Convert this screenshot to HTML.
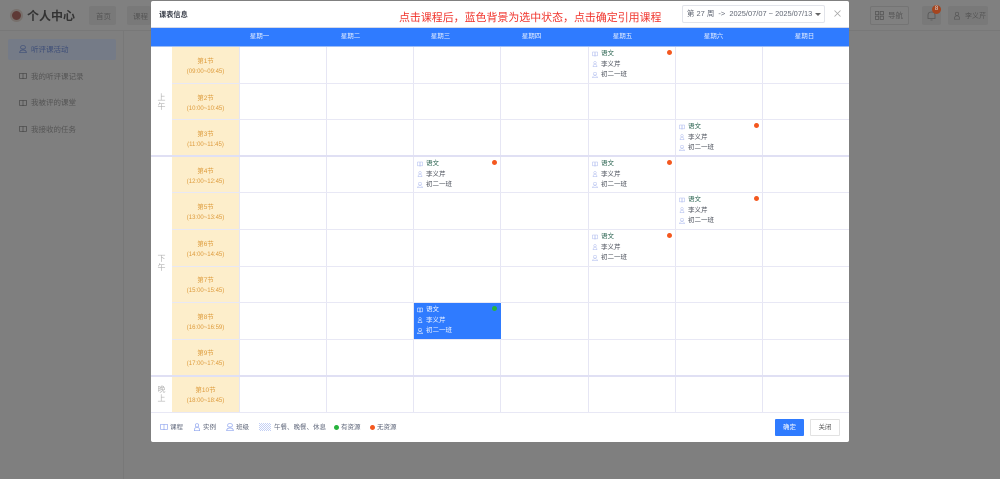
<!DOCTYPE html>
<html lang="zh">
<head>
<meta charset="utf-8">
<title>课表信息</title>
<style>
html,body{margin:0;padding:0;width:1000px;height:479px;overflow:hidden;background:#7f7f7f;font-family:"Liberation Sans","Noto Sans CJK SC",sans-serif;}
*{box-sizing:border-box;}
#r{position:absolute;left:0;top:0;width:1000px;height:479px;filter:blur(.3px);}
.a{position:absolute;white-space:nowrap;}
.hl{position:absolute;left:151px;width:698px;height:1px;background:#e8e8f5;}
.hl2{position:absolute;left:151px;width:698px;height:2px;background:#e0e0f4;}
.vl{position:absolute;top:47px;height:365px;width:1px;background:#e6e6f4;}
.day{position:absolute;top:28px;height:19px;line-height:18px;width:87px;text-align:center;color:#e8f0ff;font-size:6.5px;}
.slot{position:absolute;left:172px;width:68px;background:#fdeecb;border-right:1px solid #eee6d0;color:#dd9a3a;font-size:6.5px;text-align:center;line-height:9.5px;padding-top:10px;}
.slot small{font-size:6px;}
.per{position:absolute;left:151px;width:21px;text-align:center;color:#b5b5b5;font-size:8px;line-height:9px;}
.c{position:absolute;width:87px;height:36px;font-size:6.5px;color:#4a4f5a;}
.c svg{position:absolute;left:3px;width:6px;height:6px;}
.c span{position:absolute;left:12px;line-height:8px;}
.c i{position:absolute;left:78px;top:3px;width:5px;height:5px;border-radius:50%;background:#f4581f;}
.c .n{color:#2a6350;top:2.5px;}
.sel{background:#2f7bff;color:#f2f6ff;}
.sel .n{color:#f4f8ff;}
.sel i{background:#27b33d;}
.lg{position:absolute;top:423.5px;font-size:6.5px;color:#5c6478;line-height:8px;white-space:nowrap;}
.nav{position:absolute;color:#555;font-size:7.5px;white-space:nowrap;}
</style>
</head>
<body>
<svg width="0" height="0" style="position:absolute">
<defs>
<symbol id="b" viewBox="0 0 12 12"><path d="M1 2h4.500q.5 0 .5 1v7.500q0-.8-1-.8H1zM11 2H6.500q-.5 0-.5 1v7.500q0-.8 1-.8h4z" fill="none" stroke="currentColor" stroke-width="1"/></symbol>
<symbol id="p" viewBox="0 0 12 12"><circle cx="6" cy="3.500" r="2.500" fill="none" stroke="currentColor"/><path d="M2 11.500q0-5 4-5t4 5z" fill="none" stroke="currentColor"/></symbol>
<symbol id="g" viewBox="0 0 12 12"><rect x="2.500" y="1" width="7" height="5" rx="2.500" fill="none" stroke="currentColor"/><path d="M1 11.500q0-4 5-4t5 4z" fill="none" stroke="currentColor"/></symbol>
<pattern id="hatch" width="2" height="2" patternUnits="userSpaceOnUse"><rect width="2" height="2" fill="#fff"/><rect width="1" height="1" fill="#c4d0f4"/><rect x="1" y="1" width="1" height="1" fill="#c4d0f4"/></pattern>
</defs>
</svg>
<div id="r">
<!-- background page -->
<div class="a" style="left:0;top:0;width:1000px;height:31px;background:#808080;border-bottom:1px solid #787878"></div>
<div class="a" style="left:123px;top:31px;width:1px;height:448px;background:#787878"></div>
<div class="a" style="left:10px;top:9px;width:13px;height:13px;border-radius:50%;background:#5f3a36;border:2px solid #77706c"></div>
<div class="a" style="left:27px;top:9px;font-size:12px;font-weight:bold;color:#333;line-height:15px">个人中心</div>
<div class="a" style="left:89px;top:6px;width:27px;height:19px;background:#797979;border-radius:2px"></div>
<div class="nav" style="left:96px;top:11px">首页</div>
<div class="a" style="left:127px;top:6px;width:24px;height:19px;background:#797979;border-radius:2px"></div>
<div class="nav" style="left:133px;top:11px">课程</div>
<div class="a" style="left:8px;top:39px;width:108px;height:21px;background:#757b87;border-radius:2px"></div>
<svg class="a" style="left:19px;top:45px;color:#3f4f78" width="8" height="8"><use href="#g"/></svg>
<div class="nav" style="left:31px;top:44px;color:#3f4f78">听评课活动</div>
<svg class="a" style="left:19px;top:72px;color:#444" width="8" height="8"><use href="#b"/></svg>
<div class="nav" style="left:31px;top:71px">我的听评课记录</div>
<svg class="a" style="left:19px;top:99px;color:#444" width="8" height="8"><use href="#b"/></svg>
<div class="nav" style="left:31px;top:97px">我被评的课堂</div>
<svg class="a" style="left:19px;top:125px;color:#444" width="8" height="8"><use href="#b"/></svg>
<div class="nav" style="left:31px;top:124px">我接收的任务</div>

<div class="a" style="left:870px;top:6px;width:39px;height:19px;border:1px solid #747474;border-radius:2px"></div>
<svg class="a" style="left:875px;top:11px" width="9" height="9" viewBox="0 0 9 9" fill="none" stroke="#555" stroke-width=".8"><rect x=".5" y=".5" width="3.200" height="3.200"/><rect x="5.200" y=".5" width="3.200" height="3.200"/><rect x=".5" y="5.200" width="3.200" height="3.200"/><rect x="5.200" y="5.200" width="3.200" height="3.200"/></svg>
<div class="nav" style="left:888px;top:10px">导航</div>
<div class="a" style="left:922px;top:6px;width:19px;height:19px;background:#797979;border-radius:2px"></div>
<svg class="a" style="left:927px;top:11px" width="9" height="10" viewBox="0 0 9 10" fill="none" stroke="#555" stroke-width=".8"><path d="M1 7.500V4q0-3 3.500-3T8 4v3.500zM3.500 9h2"/></svg>
<div class="a" style="left:932px;top:5px;width:9px;height:9px;border-radius:50%;background:#a5451f;color:#ddd;font-size:6px;line-height:9px;text-align:center">8</div>
<div class="a" style="left:948px;top:6px;width:40px;height:19px;background:#797979;border-radius:2px"></div>
<svg class="a" style="left:953px;top:11px;color:#555" width="8" height="9"><use href="#p"/></svg>
<div class="nav" style="left:965px;top:11px;font-size:7px">李义芹</div>

<!-- modal -->
<div class="a" style="left:151px;top:1px;width:698px;height:441px;background:#fff;border-radius:2px"></div>
<div class="a" style="left:159px;top:9.500px;font-size:7.200px;line-height:9px;color:#3a3f4a;font-weight:bold">课表信息</div>
<div class="a" style="left:399px;top:10.500px;font-size:10.950px;line-height:14px;color:#f0342c">点击课程后，蓝色背景为选中状态，点击确定引用课程</div>
<div class="a" style="left:682px;top:5px;width:143px;height:18px;border:1px solid #e2e4ea;border-radius:2px;font-size:7.450px;line-height:16.500px;color:#5f6572;padding-left:4px">第 27 周 &nbsp;-&gt;&nbsp; 2025/07/07 ~ 2025/07/13</div>
<div class="a" style="left:815px;top:13px;width:0;height:0;border-left:3px solid transparent;border-right:3px solid transparent;border-top:3px solid #666"></div>
<svg class="a" style="left:834px;top:10px" width="7" height="7" viewBox="0 0 7 7" stroke="#a5a5a5" stroke-width=".8"><path d="M.5.5l6 6M6.500.5l-6 6"/></svg>

<div class="a" style="left:151px;top:27px;width:698px;height:1px;background:#d5d9e8"></div>
<div class="a" style="left:151px;top:28px;width:698px;height:19px;background:#2f7bff;border-bottom:1px solid #9dbdf5"></div>
<div class="day" style="left:216px">星期一</div>
<div class="day" style="left:307px">星期二</div>
<div class="day" style="left:397px">星期三</div>
<div class="day" style="left:488px">星期四</div>
<div class="day" style="left:579px">星期五</div>
<div class="day" style="left:670px">星期六</div>
<div class="day" style="left:761px">星期日</div>

<div class="slot" style="top:47px;height:37px">第1节<br><small>(09:00~09:45)</small></div>
<div class="slot" style="top:84px;height:36px">第2节<br><small>(10:00~10:45)</small></div>
<div class="slot" style="top:120px;height:37px">第3节<br><small>(11:00~11:45)</small></div>
<div class="slot" style="top:157px;height:36px">第4节<br><small>(12:00~12:45)</small></div>
<div class="slot" style="top:193px;height:37px">第5节<br><small>(13:00~13:45)</small></div>
<div class="slot" style="top:230px;height:36px">第6节<br><small>(14:00~14:45)</small></div>
<div class="slot" style="top:266px;height:37px">第7节<br><small>(15:00~15:45)</small></div>
<div class="slot" style="top:303px;height:36px">第8节<br><small>(16:00~16:59)</small></div>
<div class="slot" style="top:339px;height:37px">第9节<br><small>(17:00~17:45)</small></div>
<div class="slot" style="top:376px;height:36px">第10节<br><small>(18:00~18:45)</small></div>

<div class="per" style="top:93px">上<br>午</div>
<div class="per" style="top:254px">下<br>午</div>
<div class="per" style="top:385px">晚<br>上</div>

<div class="vl" style="left:239px"></div>
<div class="vl" style="left:326px"></div>
<div class="vl" style="left:413px"></div>
<div class="vl" style="left:500px"></div>
<div class="vl" style="left:588px"></div>
<div class="vl" style="left:675px"></div>
<div class="vl" style="left:762px"></div>

<div class="hl" style="top:83px;left:172px;width:677px"></div>
<div class="hl" style="top:119px;left:172px;width:677px"></div>
<div class="hl2" style="top:155px"></div>
<div class="hl" style="top:192px;left:172px;width:677px"></div>
<div class="hl" style="top:229px;left:172px;width:677px"></div>
<div class="hl" style="top:266px;left:172px;width:677px"></div>
<div class="hl" style="top:302px;left:172px;width:677px"></div>
<div class="hl" style="top:339px;left:172px;width:677px"></div>
<div class="hl2" style="top:375px"></div>
<div class="hl" style="top:412px"></div>

<!-- courses -->
<div class="c" style="left:589px;top:47px"><svg style="top:3.500px;color:#a9b7ee"><use href="#b"/></svg><svg style="top:14px;color:#a9b7ee"><use href="#p"/></svg><svg style="top:24.500px;color:#a9b7ee"><use href="#g"/></svg><span class="n">语文</span><span style="top:13.500px">李义芹</span><span style="top:23.500px">初二一班</span><i></i></div>
<div class="c" style="left:676px;top:120px"><svg style="top:3.500px;color:#a9b7ee"><use href="#b"/></svg><svg style="top:14px;color:#a9b7ee"><use href="#p"/></svg><svg style="top:24.500px;color:#a9b7ee"><use href="#g"/></svg><span class="n">语文</span><span style="top:13.500px">李义芹</span><span style="top:23.500px">初二一班</span><i></i></div>
<div class="c" style="left:414px;top:157px"><svg style="top:3.500px;color:#a9b7ee"><use href="#b"/></svg><svg style="top:14px;color:#a9b7ee"><use href="#p"/></svg><svg style="top:24.500px;color:#a9b7ee"><use href="#g"/></svg><span class="n">语文</span><span style="top:13.500px">李义芹</span><span style="top:23.500px">初二一班</span><i></i></div>
<div class="c" style="left:589px;top:157px"><svg style="top:3.500px;color:#a9b7ee"><use href="#b"/></svg><svg style="top:14px;color:#a9b7ee"><use href="#p"/></svg><svg style="top:24.500px;color:#a9b7ee"><use href="#g"/></svg><span class="n">语文</span><span style="top:13.500px">李义芹</span><span style="top:23.500px">初二一班</span><i></i></div>
<div class="c" style="left:676px;top:193px"><svg style="top:3.500px;color:#a9b7ee"><use href="#b"/></svg><svg style="top:14px;color:#a9b7ee"><use href="#p"/></svg><svg style="top:24.500px;color:#a9b7ee"><use href="#g"/></svg><span class="n">语文</span><span style="top:13.500px">李义芹</span><span style="top:23.500px">初二一班</span><i></i></div>
<div class="c" style="left:589px;top:230px"><svg style="top:3.500px;color:#a9b7ee"><use href="#b"/></svg><svg style="top:14px;color:#a9b7ee"><use href="#p"/></svg><svg style="top:24.500px;color:#a9b7ee"><use href="#g"/></svg><span class="n">语文</span><span style="top:13.500px">李义芹</span><span style="top:23.500px">初二一班</span><i></i></div>
<div class="c sel" style="left:414px;top:303px"><svg style="top:3.500px;color:#fff"><use href="#b"/></svg><svg style="top:14px;color:#fff"><use href="#p"/></svg><svg style="top:24.500px;color:#fff"><use href="#g"/></svg><span class="n">语文</span><span style="top:13.500px">李义芹</span><span style="top:23.500px">初二一班</span><i></i></div>

<!-- legend -->
<svg class="a" style="left:160px;top:423px;color:#8ea4ee" width="8" height="8"><use href="#b"/></svg>
<div class="lg" style="left:170px">课程</div>
<svg class="a" style="left:193px;top:423px;color:#8ea4ee" width="8" height="8"><use href="#p"/></svg>
<div class="lg" style="left:203px">实例</div>
<svg class="a" style="left:226px;top:423px;color:#8ea4ee" width="8" height="8"><use href="#g"/></svg>
<div class="lg" style="left:236px">班级</div>
<svg class="a" style="left:259px;top:423px" width="12" height="8"><rect width="12" height="8" fill="url(#hatch)"/></svg>
<div class="lg" style="left:274px">午餐、晚餐、休息</div>
<div class="a" style="left:334px;top:424.500px;width:5px;height:5px;border-radius:50%;background:#27b33d"></div>
<div class="lg" style="left:341px">有资源</div>
<div class="a" style="left:370px;top:424.500px;width:5px;height:5px;border-radius:50%;background:#f4581f"></div>
<div class="lg" style="left:377px">无资源</div>

<div class="a" style="left:775px;top:419px;width:29px;height:17px;background:#2f7bff;border-radius:1px;color:#fff;font-size:6.500px;line-height:17px;text-align:center">确定</div>
<div class="a" style="left:810px;top:419px;width:30px;height:17px;background:#fff;border:1px solid #e2e2e2;border-radius:1px;color:#555;font-size:6.500px;line-height:15px;text-align:center">关闭</div>
</div>
</body>
</html>
